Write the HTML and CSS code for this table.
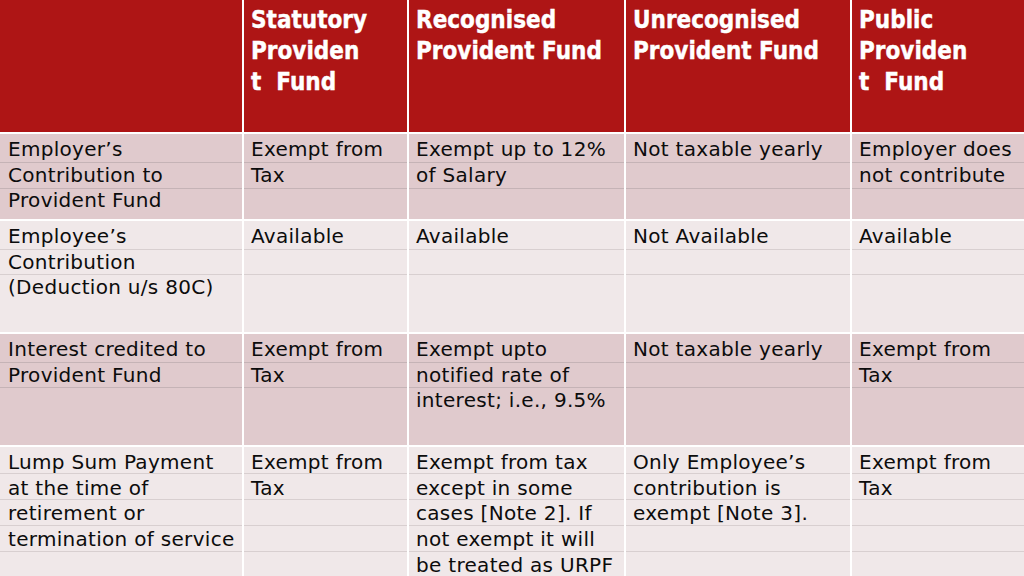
FILE: index.html
```html
<!DOCTYPE html>
<html lang="en">
<head>
<meta charset="utf-8">
<title>Provident Fund Comparison</title>
<link rel="stylesheet" href="styles.css">
</head>
<body>
<div class="table">
  <div class="row head">
    <div class="cell"></div>
    <div class="cell">Statutory<br>Providen<br>t&nbsp; Fund</div>
    <div class="cell">Recognised<br>Provident Fund</div>
    <div class="cell">Unrecognised<br>Provident Fund</div>
    <div class="cell">Public<br>Providen<br>t&nbsp; Fund</div>
  </div>
  <div class="row dark r1">
    <div class="cell">Employer’s<br>Contribution to<br>Provident Fund</div>
    <div class="cell">Exempt from<br>Tax</div>
    <div class="cell">Exempt up to 12%<br>of Salary</div>
    <div class="cell">Not taxable yearly</div>
    <div class="cell">Employer does<br>not contribute</div>
  </div>
  <div class="row light r2">
    <div class="cell">Employee’s<br>Contribution<br>(Deduction u/s 80C)</div>
    <div class="cell">Available</div>
    <div class="cell">Available</div>
    <div class="cell">Not Available</div>
    <div class="cell">Available</div>
  </div>
  <div class="row dark r3">
    <div class="cell">Interest credited to<br>Provident Fund</div>
    <div class="cell">Exempt from<br>Tax</div>
    <div class="cell">Exempt upto<br>notified rate of<br>interest; i.e., 9.5%</div>
    <div class="cell">Not taxable yearly</div>
    <div class="cell">Exempt from<br>Tax</div>
  </div>
  <div class="row light r4">
    <div class="cell">Lump Sum Payment<br>at the time of<br>retirement or<br>termination of service</div>
    <div class="cell">Exempt from<br>Tax</div>
    <div class="cell">Exempt from tax<br>except in some<br>cases [Note 2]. If<br>not exempt it will<br>be treated as URPF</div>
    <div class="cell">Only Employee’s<br>contribution is<br>exempt [Note 3].</div>
    <div class="cell">Exempt from<br>Tax</div>
  </div>
</div>
</body>
</html>
```
FILE: styles.css
```css
html, body {
  margin: 0;
  padding: 0;
  background: #ffffff;
}
.table {
  width: 1024px;
  height: 576px;
  overflow: hidden;
  display: grid;
  grid-template-columns: 242px 163px 215px 224px 172px;
  grid-template-rows: 132px 85px 111px 111px 130px;
  gap: 2px;
  background: #ffffff;
  font-family: "DejaVu Sans", Verdana, sans-serif;
}
.row {
  display: contents;
}
.cell {
  padding: 3px 6px 0 7px;
  font-size: 20px;
  line-height: 25.7px;
  letter-spacing: 0.3px;
  color: #0c0c0c;
  white-space: nowrap;
  overflow: hidden;
}
.row > .cell:first-child {
  padding-left: 8px;
}
.head .cell {
  background: #ae1515;
  color: #ffffff;
  font-family: "DejaVu Sans Condensed", "DejaVu Sans", sans-serif;
  font-stretch: condensed;
  font-weight: bold;
  font-size: 24px;
  line-height: 31px;
  letter-spacing: 0;
  -webkit-text-stroke: 0.4px #ffffff;
  padding: 5px 4px 0 7px;
}
.dark .cell {
  background-color: #e0cacd;
  background-repeat: no-repeat;
  background-size: 100% 1px;
  background-image: linear-gradient(#c5b3b6, #c5b3b6), linear-gradient(#c5b3b6, #c5b3b6);
}
.light .cell {
  background-color: #f0e8e9;
  background-repeat: no-repeat;
  background-size: 100% 1px;
  background-image: linear-gradient(#d8cfd0, #d8cfd0), linear-gradient(#d8cfd0, #d8cfd0);
}
.r1 .cell { background-position: 0 28px, 0 54px; }
.r2 .cell { background-position: 0 28px, 0 53px; }
.r3 .cell { background-position: 0 28px, 0 53px; }
.r4 .cell {
  background-image: linear-gradient(#d8cfd0, #d8cfd0), linear-gradient(#d8cfd0, #d8cfd0),
                    linear-gradient(#d8cfd0, #d8cfd0), linear-gradient(#d8cfd0, #d8cfd0);
  background-position: 0 26px, 0 52px, 0 78px, 0 104px;
}
```
